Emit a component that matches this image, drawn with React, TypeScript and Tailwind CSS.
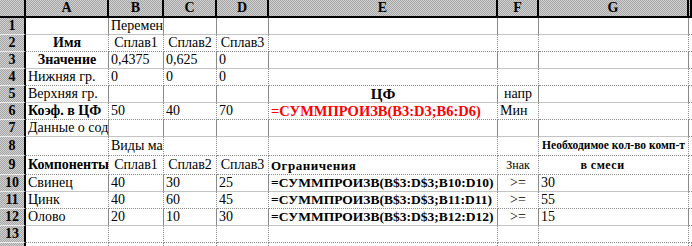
import React from 'react';

type Cell = { t?: string; c?: string };

const dither =
  'bg-[repeating-conic-gradient(#a4a4a4_0_25%,#d2d2d2_0_50%)] bg-[length:2px_2px] bg-size-[2px_2px]';

const bold = 'font-bold text-[14px]';
const red = 'font-bold text-[#ff0000] text-[14.5px]';
const formula = 'font-bold text-[13.5px]';

// each row: A..G
const rows: Cell[][] = [
  [{}, { t: 'Перемен' }, {}, {}, {}, {}, {}],
  [
    { t: 'Имя', c: `${bold} justify-center` },
    { t: 'Сплав1', c: 'justify-center' },
    { t: 'Сплав2', c: 'justify-center' },
    { t: 'Сплав3', c: 'justify-center' },
    {}, {}, {},
  ],
  [
    { t: 'Значение', c: `${bold} justify-center` },
    { t: '0,4375' },
    { t: '0,625' },
    { t: '0' },
    {}, {}, {},
  ],
  [{ t: 'Нижняя гр.' }, { t: '0' }, { t: '0' }, { t: '0' }, {}, {}, {}],
  [
    { t: 'Верхняя гр.' }, {}, {}, {},
    { t: 'ЦФ', c: 'font-bold text-[15px] justify-center' },
    { t: 'напр', c: 'justify-center' },
    {},
  ],
  [
    { t: 'Коэф. в ЦФ', c: bold },
    { t: '50' },
    { t: '40' },
    { t: '70' },
    { t: '=СУММПРОИЗВ(B3:D3;B6:D6)', c: red },
    { t: 'Мин' },
    {},
  ],
  [{ t: 'Данные о сод' }, {}, {}, {}, {}, {}, {}],
  [
    {}, { t: 'Виды ма' }, {}, {}, {}, {},
    { t: 'Необходимое кол-во комп-т', c: 'font-bold justify-center text-[11.5px]' },
  ],
  [
    { t: 'Компоненты', c: bold },
    { t: 'Сплав1', c: 'justify-center' },
    { t: 'Сплав2', c: 'justify-center' },
    { t: 'Сплав3', c: 'justify-center' },
    { t: 'Ограничения', c: 'font-bold text-[13px] tracking-[0.5px]' },
    { t: 'Знак', c: 'justify-center text-[12px]' },
    { t: 'в смеси', c: 'font-bold justify-center text-[12px] tracking-[0.5px] pr-[24px]' },
  ],
  [
    { t: 'Свинец' }, { t: '40' }, { t: '30' }, { t: '25' },
    { t: '=СУММПРОИЗВ(B$3:D$3;B10:D10)', c: formula },
    { t: '>=', c: 'justify-center' },
    { t: '30' },
  ],
  [
    { t: 'Цинк' }, { t: '40' }, { t: '60' }, { t: '45' },
    { t: '=СУММПРОИЗВ(B$3:D$3;B11:D11)', c: formula },
    { t: '>=', c: 'justify-center' },
    { t: '55' },
  ],
  [
    { t: 'Олово' }, { t: '20' }, { t: '10' }, { t: '30' },
    { t: '=СУММПРОИЗВ(B$3:D$3;B12:D12)', c: formula },
    { t: '>=', c: 'justify-center' },
    { t: '15' },
  ],
  [{}, {}, {}, {}, {}, {}, {}],
];

// bottom gridline style per data row
const solidRows = [true, false, true, false, true, false, true, false, false, true, false, true, false];

export default function App() {
  return (
    <div className="w-[692px] h-[246px] overflow-hidden bg-white text-black [font-family:'Liberation_Serif','Times_New_Roman',serif] text-[14px] leading-none">
      <div className="grid grid-cols-[26px_83px_55px_53px_52px_229px_41px_150px_3px] grid-rows-[18px_17px_17px_17px_17px_17px_17px_17px_19px_19px_17px_17px_17px_17px_3px]">
        {/* column headers */}
        <div className={`${dither} border-r-2 border-b-2 border-black`} />
        {['A', 'B', 'C', 'D', 'E', 'F', 'G', ''].map((h, i) => (
          <div
            key={h + i}
            className={`${dither} border-r-2 border-b-2 border-black flex items-center justify-center font-bold text-[14px]`}
          >
            {h}
          </div>
        ))}

        {rows.map((row, r) => (
          <React.Fragment key={r}>
            <div
              className={`${dither} border-r-2 border-r-black border-b border-b-[#ececec] flex items-center justify-center font-bold text-[14px]`}
            >
              {r + 1}
            </div>
            {row.map((cell, c) => (
              <div
                key={c}
                className={`border-r border-dotted border-r-[#8a8a8a] border-b ${
                  solidRows[r] ? 'border-b-[#c4c4c4] border-solid' : 'border-b-[#8a8a8a]'
                } overflow-hidden whitespace-nowrap flex items-center px-[2px] ${cell.c ?? ''}`}
              >
                {cell.t}
              </div>
            ))}
            <div className="border-b border-dotted border-b-[#8a8a8a]" />
          </React.Fragment>
        ))}

        {/* partial last row */}
        <div className={`${dither} border-r-2 border-black`} />
        {Array.from({ length: 8 }).map((_, i) => (
          <div key={i} className="border-r border-dotted border-r-[#8a8a8a]" />
        ))}
      </div>
    </div>
  );
}
